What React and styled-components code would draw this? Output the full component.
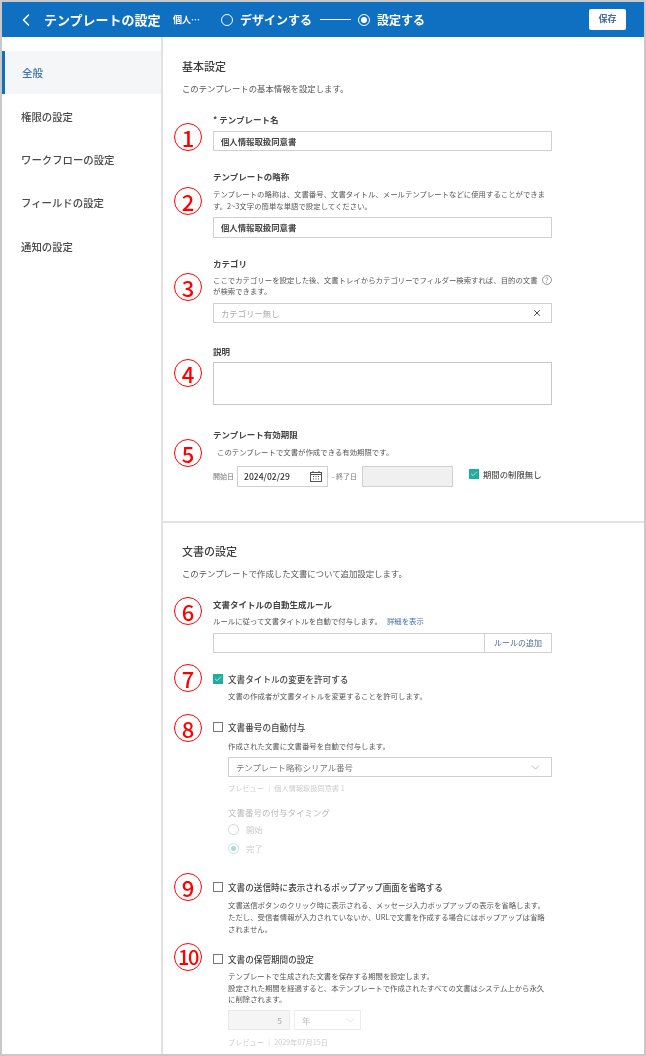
import React from 'react'
import styled, { createGlobalStyle } from 'styled-components'
import { ChevronLeft, ChevronDown, X, Check } from 'lucide-react'

const GlobalStyle = createGlobalStyle`
    html, body {
        margin: 0;
        padding: 0;
        background: #fff;
    }
    * {
        box-sizing: border-box;
    }
    body {
        font-family: "Noto Sans CJK JP", "Noto Sans", sans-serif;
        color: #444;
    }
`

const menu = ['全般', '権限の設定', 'ワークフローの設定', 'フィールドの設定', '通知の設定']

function CalendarIcon() {
    return (
        <svg width="12" height="11" viewBox="0 0 12 11" fill="none" stroke="#555" strokeWidth="1">
            <rect x="0.5" y="1.5" width="11" height="9" />
            <path d="M0.5 3.5H11.5M3 0V2M9 0V2" />
            <path d="M3 5.5H4M5.5 5.5H6.5M8 5.5H9M3 8H4M5.5 8H6.5M8 8H9" />
        </svg>
    )
}

function App() {
    return (
        <Frame>
            <GlobalStyle />
            <Header>
                <BackIcon><ChevronLeft size={20} strokeWidth={1.8} /></BackIcon>
                <Title>テンプレートの設定</Title>
                <DocName>個人…</DocName>
                <Step>
                    <StepRadio />
                    デザインする
                </Step>
                <StepLine />
                <Step>
                    <StepRadio $on />
                    設定する
                </Step>
                <SaveButton>保存</SaveButton>
            </Header>
            <Body>
                <Sidebar>
                    {menu.map((item, i) => (
                        <MenuItem key={item} $active={i === 0}>{item}</MenuItem>
                    ))}
                </Sidebar>
                <Main>
                    <Section $top={21} $bottom={34}>
                        <Heading>基本設定</Heading>
                        <Lead>このテンプレートの基本情報を設定します。</Lead>

                        <Field $gap={19}>
                            <Marker $offset={10}>1</Marker>
                            <div>
                                <Label>* テンプレート名</Label>
                                <TextInput $gap={6} readOnly value="個人情報取扱同意書" />
                            </div>
                        </Field>

                        <Field $gap={19}>
                            <Marker $offset={17}>2</Marker>
                            <div>
                                <Label>テンプレートの略称</Label>
                                <Help $gap={6}>
                                    テンプレートの略称は、文書番号、文書タイトル、メールテンプレートなどに使用することができま<br />
                                    す。2~3文字の簡単な単語で設定してください。
                                </Help>
                                <TextInput $gap={5} $h={21} readOnly value="個人情報取扱同意書" />
                            </div>
                        </Field>

                        <Field $gap={19}>
                            <Marker $offset={16}>3</Marker>
                            <div>
                                <Label>カテゴリ</Label>
                                <Help $gap={5}>
                                    ここでカテゴリーを設定した後、文書トレイからカテゴリーでフィルダー検索すれば、目的の文書
                                    <HelpIcon>?</HelpIcon><br />
                                    が検索できます。
                                </Help>
                                <SelectBox $gap={5.4}>
                                    <Placeholder>カテゴリー無し</Placeholder>
                                    <X size={10} strokeWidth={2} color="#222" />
                                </SelectBox>
                            </div>
                        </Field>

                        <Field $gap={22.6}>
                            <Marker $offset={14}>4</Marker>
                            <div>
                                <Label>説明</Label>
                                <TextArea readOnly />
                            </div>
                        </Field>

                        <Field $gap={23}>
                            <Marker $offset={11}>5</Marker>
                            <div>
                                <Label>テンプレート有効期限</Label>
                                <Help $gap={6} $indent={4}>このテンプレートで文書が作成できる有効期限です。</Help>
                                <DateRow>
                                    <DateLabel $w={24}>開始日</DateLabel>
                                    <DateBox>
                                        2024/02/29
                                        <CalendarIcon />
                                    </DateBox>
                                    <DateLabel $w={30}>- 終了日</DateLabel>
                                    <DateBox $disabled />
                                    <NoLimit>
                                        <CheckBox $on><Check size={8} strokeWidth={2} color="#fff" /></CheckBox>
                                        期間の制限無し
                                    </NoLimit>
                                </DateRow>
                            </div>
                        </Field>
                    </Section>

                    <Section $top={20} $bottom={0} $divider>
                        <Heading>文書の設定</Heading>
                        <Lead>このテンプレートで作成した文書について追加設定します。</Lead>

                        <Field $gap={19}>
                            <Marker $offset={-1}>6</Marker>
                            <div>
                                <Label>文書タイトルの自動生成ルール</Label>
                                <Help $gap={5}>
                                    ルールに従って文書タイトルを自動で付与します。
                                    <DetailLink>詳細を表示</DetailLink>
                                </Help>
                                <RuleInput>
                                    <RuleText />
                                    <RuleButton>ルールの追加</RuleButton>
                                </RuleInput>
                            </div>
                        </Field>

                        <Field $gap={20}>
                            <Marker $offset={-9}>7</Marker>
                            <div>
                                <CheckRow>
                                    <CheckBox $on><Check size={8} strokeWidth={2} color="#fff" /></CheckBox>
                                    文書タイトルの変更を許可する
                                </CheckRow>
                                <Nested>
                                    <Help $gap={5}>文書の作成者が文書タイトルを変更することを許可します。</Help>
                                </Nested>
                            </div>
                        </Field>

                        <Field $gap={19}>
                            <Marker $offset={-7}>8</Marker>
                            <div>
                                <CheckRow>
                                    <CheckBox />
                                    文書番号の自動付与
                                </CheckRow>
                                <Nested>
                                    <Help $gap={7}>作成された文書に文書番号を自動で付与します。</Help>
                                    <SelectBox $gap={6}>
                                        <SelectValue>テンプレート略称シリアル番号</SelectValue>
                                        <ChevronDown size={13} strokeWidth={1.2} color="#999" />
                                    </SelectBox>
                                    <Preview $gap={5}>プレビュー │ 個人情報取扱同意書 1</Preview>
                                    <DimLabel>文書番号の付与タイミング</DimLabel>
                                    <RadioRow $gap={5}><DimRadio />開始</RadioRow>
                                    <RadioRow $gap={7}><DimRadio $on />完了</RadioRow>
                                </Nested>
                            </div>
                        </Field>

                        <Field $gap={27}>
                            <Marker $offset={-8}>9</Marker>
                            <div>
                                <CheckRow>
                                    <CheckBox />
                                    文書の送信時に表示されるポップアップ画面を省略する
                                </CheckRow>
                                <Nested>
                                    <Help $gap={6}>
                                        文書送信ボタンのクリック時に表示される、メッセージ入力ポップアップの表示を省略します。<br />
                                        ただし、受信者情報が入力されていないか、URLで文書を作成する場合にはポップアップは省略<br />
                                        されません。
                                    </Help>
                                </Nested>
                            </div>
                        </Field>

                        <Field $gap={18}>
                            <Marker $offset={-10} $wide>10</Marker>
                            <div>
                                <CheckRow>
                                    <CheckBox />
                                    文書の保管期間の設定
                                </CheckRow>
                                <Nested>
                                    <Help $gap={5}>
                                        テンプレートで生成された文書を保存する期間を設定します。<br />
                                        設定された期間を経過すると、本テンプレートで作成されたすべての文書はシステム上から永久<br />
                                        に削除されます。
                                    </Help>
                                    <PeriodRow>
                                        <PeriodValue>5</PeriodValue>
                                        <PeriodUnit>
                                            年
                                            <ChevronDown size={13} strokeWidth={1.1} color="#ccc" />
                                        </PeriodUnit>
                                    </PeriodRow>
                                    <Preview $gap={6}>プレビュー │ 2029年07月15日</Preview>
                                </Nested>
                            </div>
                        </Field>
                    </Section>
                </Main>
            </Body>
        </Frame>
    )
}

const Frame = styled.div`
    width: 646px;
    height: 1056px;
    border: 2px solid #c9c9c9;
    overflow: hidden;
    display: flex;
    flex-direction: column;
    background: #fff;
    filter: blur(0.4px);
`

const Header = styled.header`
    height: 35px;
    flex: none;
    display: flex;
    align-items: center;
    background: #0f70c1;
    color: #fff;
    padding-left: 14px;
`

const BackIcon = styled.span`
    display: flex;
    width: 28px;
`

const Title = styled.h1`
    margin: 0;
    font-size: 13px;
    font-weight: 700;
    width: 129px;
    white-space: nowrap;
`

const DocName = styled.span`
    font-size: 9px;
    font-weight: 700;
    width: 48px;
`

const Step = styled.span`
    display: flex;
    align-items: center;
    gap: 7px;
    font-size: 12px;
    font-weight: 700;
    white-space: nowrap;
`

const StepRadio = styled.i`
    width: 12px;
    height: 12px;
    border: 1px solid #fff;
    border-radius: 50%;
    display: flex;
    align-items: center;
    justify-content: center;
    &::after {
        content: '';
        width: 6px;
        height: 6px;
        border-radius: 50%;
        background: ${props => props.$on ? '#fff' : 'transparent'};
    }
`

const StepLine = styled.span`
    width: 31px;
    height: 1px;
    background: #fff;
    margin: 0 7px 0 8px;
`

const SaveButton = styled.button`
    width: 37px;
    height: 21px;
    margin-left: auto;
    margin-right: 18px;
    border: 0;
    border-radius: 2px;
    padding: 0 0 2px;
    background: #fff;
    color: #4a6d9c;
    font-family: inherit;
    font-size: 9px;
    font-weight: 700;
`

const Body = styled.div`
    flex: 1;
    display: flex;
    min-height: 0;
`

const Sidebar = styled.nav`
    width: 161px;
    flex: none;
    padding-top: 14px;
    border-right: 2px solid #e2e2e2;
`

const MenuItem = styled.div`
    height: 43.4px;
    display: flex;
    align-items: center;
    padding-left: ${props => props.$active ? '17px' : '16px'};
    font-size: 10.4px;
    font-weight: 500;
    white-space: nowrap;
    color: ${props => props.$active ? '#3d6ea3' : '#4a4a4a'};
    background: ${props => props.$active ? '#f5f6f8' : 'transparent'};
    border-left: 3px solid ${props => props.$active ? '#0f70c1' : 'transparent'};
`

const Main = styled.main`
    flex: 1;
    min-width: 0;
`

const Section = styled.section`
    padding: ${props => props.$top}px 92px ${props => props.$bottom}px 10px;
    border-top: ${props => props.$divider ? '2px solid #e2e2e2' : '0'};
    margin-right: 0;
`

const Heading = styled.h2`
    margin: 0;
    padding-left: 9px;
    font-size: 11px;
    line-height: 16px;
    font-weight: 500;
    color: #3c3c3c;
`

const Lead = styled.p`
    margin: 8px 0 0;
    padding-left: 9px;
    font-size: 8.4px;
    line-height: 12px;
    color: #555;
    white-space: nowrap;
`

const Field = styled.div`
    display: grid;
    grid-template-columns: 30px 339px;
    column-gap: 10px;
    align-items: start;
    margin-top: ${props => props.$gap}px;
`

const Marker = styled.span`
    display: flex;
    align-items: center;
    justify-content: center;
    width: 28px;
    height: 28px;
    margin-top: ${props => props.$offset}px;
    margin-left: 1px;
    border: 1px solid #f00;
    border-radius: 50%;
    font-size: ${props => props.$wide ? '20px' : '22px'};
    font-weight: 500;
    line-height: 1;
    letter-spacing: ${props => props.$wide ? '-1.5px' : '0'};
    color: #f00;
`

const Label = styled.div`
    font-size: 8.5px;
    line-height: 12px;
    font-weight: 700;
    color: #444;
`

const Help = styled.p`
    margin: ${props => props.$gap}px 0 0;
    padding-left: ${props => props.$indent || 0}px;
    font-size: 7.4px;
    line-height: 11.8px;
    color: #555;
    white-space: nowrap;
    position: relative;
`

const HelpIcon = styled.i`
    position: absolute;
    right: 0;
    top: 1px;
    width: 10px;
    height: 10px;
    border: 1px solid #999;
    border-radius: 50%;
    font-style: normal;
    font-size: 7px;
    line-height: 8px;
    text-align: center;
    color: #888;
`

const TextInput = styled.input`
    display: block;
    width: 100%;
    height: ${props => props.$h || 20}px;
    margin-top: ${props => props.$gap}px;
    padding: 0 7px;
    border: 1px solid #d0d0d0;
    outline: 0;
    border-radius: 0;
    background: #fff;
    font-family: inherit;
    font-size: 8.4px;
    font-weight: 700;
    color: #444;
`

const SelectBox = styled.div`
    height: 20px;
    margin-top: ${props => props.$gap}px;
    padding: 0 9px 0 7px;
    border: 1px solid #d0d0d0;
    display: flex;
    align-items: center;
    justify-content: space-between;
`

const Placeholder = styled.span`
    font-size: 8.4px;
    color: #aaa;
`

const SelectValue = styled.span`
    font-size: 8.4px;
    color: #777;
`

const TextArea = styled.textarea`
    display: block;
    width: 100%;
    height: 43px;
    margin-top: 5px;
    border: 1px solid #c8c8c8;
    border-radius: 0;
    outline: 0;
    resize: none;
`

const DateRow = styled.div`
    height: 21px;
    margin-top: 8px;
    display: flex;
    align-items: center;
`

const DateLabel = styled.span`
    flex: none;
    width: ${props => props.$w}px;
    font-size: 7px;
    color: #777;
    white-space: nowrap;
`

const DateBox = styled.div`
    flex: none;
    width: 91px;
    height: 21px;
    padding: 0 5px 0 6px;
    margin-right: 4px;
    border: 1px solid #d0d0d0;
    background: ${props => props.$disabled ? '#f0f0f0' : '#fff'};
    display: flex;
    align-items: center;
    justify-content: space-between;
    font-size: 8.6px;
    font-weight: 500;
    color: #333;
`

const CheckBox = styled.span`
    flex: none;
    width: 10px;
    height: 10px;
    display: flex;
    align-items: center;
    justify-content: center;
    border: ${props => props.$on ? '0' : '1px solid #777'};
    background: ${props => props.$on ? '#1fae9e' : '#fff'};
`

const NoLimit = styled.div`
    display: flex;
    align-items: center;
    gap: 4px;
    margin: -4px 0 0 12px;
    font-size: 8.4px;
    font-weight: 500;
    color: #555;
    white-space: nowrap;
`

const DetailLink = styled.a`
    margin-left: 5px;
    color: #3f6fb0;
`

const RuleInput = styled.div`
    height: 20px;
    margin-top: 6px;
    display: flex;
    border: 1px solid #d0d0d0;
`

const RuleText = styled.div`
    flex: 1;
`

const RuleButton = styled.div`
    width: 67px;
    border-left: 1px solid #d0d0d0;
    display: flex;
    align-items: center;
    justify-content: center;
    font-size: 8px;
    color: #4a6d9c;
`

const CheckRow = styled.div`
    display: flex;
    align-items: center;
    gap: 5px;
    height: 12px;
    font-size: 8.6px;
    font-weight: 500;
    color: #444;
    white-space: nowrap;
`

const Nested = styled.div`
    padding-left: 15px;
`

const Preview = styled.div`
    margin-top: ${props => props.$gap}px;
    font-size: 7.2px;
    line-height: 12px;
    color: #ccc;
    white-space: nowrap;
`

const DimLabel = styled.div`
    margin-top: 12px;
    font-size: 8.5px;
    line-height: 12px;
    color: #bbb;
`

const RadioRow = styled.div`
    display: flex;
    align-items: center;
    gap: 7px;
    height: 12px;
    margin-top: ${props => props.$gap}px;
    font-size: 8.4px;
    color: #ccc;
`

const DimRadio = styled.i`
    width: 11px;
    height: 11px;
    border: 1px solid ${props => props.$on ? '#bfe6e2' : '#d8d8d8'};
    border-radius: 50%;
    display: flex;
    align-items: center;
    justify-content: center;
    &::after {
        content: '';
        width: 5px;
        height: 5px;
        border-radius: 50%;
        background: ${props => props.$on ? '#a8dcd6' : 'transparent'};
    }
`

const PeriodRow = styled.div`
    display: flex;
    gap: 4px;
    height: 20px;
    margin-top: 5px;
`

const PeriodValue = styled.div`
    width: 62px;
    padding-right: 7px;
    background: #f5f5f5;
    border: 1px solid #e8e8e8;
    font-size: 8.4px;
    line-height: 18px;
    text-align: right;
    color: #aaa;
`

const PeriodUnit = styled.div`
    width: 67px;
    padding: 0 3px 0 7px;
    border: 1px solid #ececec;
    display: flex;
    align-items: center;
    justify-content: space-between;
    font-size: 8.4px;
    color: #bbb;
`

export default App
